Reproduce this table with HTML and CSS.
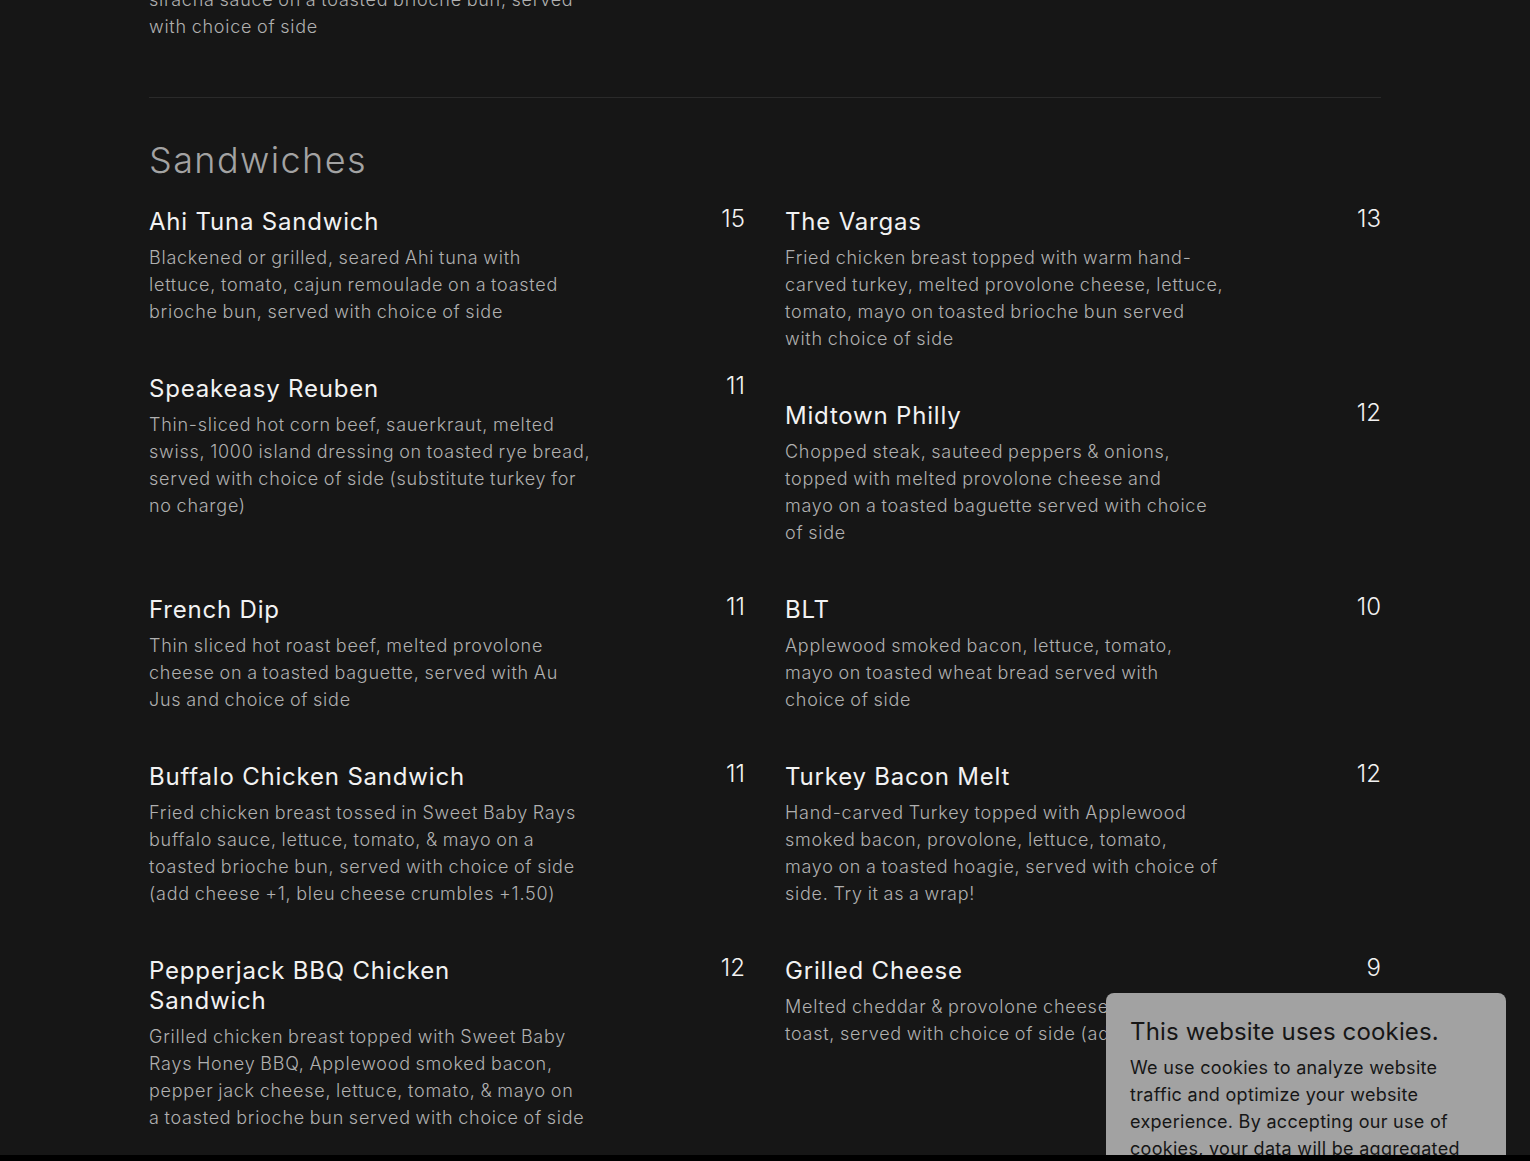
FILE: index.html
```html
<!DOCTYPE html>
<html lang="en">
<head>
    <meta charset="UTF-8">
    <meta name="viewport" content="width=device-width, initial-scale=1.0">
    <title>Menu - Sandwiches</title>
    <link rel="stylesheet" href="styles.css">
</head>
<body>
    <main class="menu">
        <!-- tail of the previous section, scrolled past -->
        <div class="columns section-tail">
            <div class="column">
                <p class="item-desc">siracha sauce on a toasted brioche bun, served<br>with choice of side</p>
            </div>
            <div class="column"></div>
        </div>

        <hr class="divider">

        <section>
            <h2 class="section-title">Sandwiches</h2>
            <div class="columns">
                <div class="column">
                    <div class="item">
                        <div class="item-body">
                            <h3 class="item-name">Ahi Tuna Sandwich</h3>
                            <p class="item-desc">Blackened or grilled, seared Ahi tuna with lettuce, tomato, cajun remoulade on a toasted brioche bun, served with choice of side</p>
                        </div>
                        <span class="item-price">15</span>
                    </div>
                    <div class="item extra-line">
                        <div class="item-body">
                            <h3 class="item-name">Speakeasy Reuben</h3>
                            <p class="item-desc">Thin-sliced hot corn beef, sauerkraut, melted swiss, 1000 island dressing on toasted rye bread, served with choice of side (substitute turkey for no charge)</p>
                        </div>
                        <span class="item-price">11</span>
                    </div>
                    <div class="item">
                        <div class="item-body">
                            <h3 class="item-name">French Dip</h3>
                            <p class="item-desc">Thin sliced hot roast beef, melted provolone cheese on a toasted baguette, served with Au Jus and choice of side</p>
                        </div>
                        <span class="item-price">11</span>
                    </div>
                    <div class="item">
                        <div class="item-body">
                            <h3 class="item-name">Buffalo Chicken Sandwich</h3>
                            <p class="item-desc">Fried chicken breast tossed in Sweet Baby Rays buffalo sauce, lettuce, tomato, &amp; mayo on a toasted brioche bun, served with choice of side (add cheese +1, bleu cheese crumbles +1.50)</p>
                        </div>
                        <span class="item-price">11</span>
                    </div>
                    <div class="item">
                        <div class="item-body">
                            <h3 class="item-name">Pepperjack BBQ Chicken Sandwich</h3>
                            <p class="item-desc">Grilled chicken breast topped with Sweet Baby Rays Honey BBQ, Applewood smoked bacon, pepper jack cheese, lettuce, tomato, &amp; mayo on<br>a toasted brioche bun served with choice of side</p>
                        </div>
                        <span class="item-price">12</span>
                    </div>
                </div>

                <div class="column">
                    <div class="item">
                        <div class="item-body">
                            <h3 class="item-name">The Vargas</h3>
                            <p class="item-desc">Fried chicken breast topped with warm hand-carved turkey, melted provolone cheese, lettuce, tomato, mayo on toasted brioche bun served with choice of side</p>
                        </div>
                        <span class="item-price">13</span>
                    </div>
                    <div class="item">
                        <div class="item-body">
                            <h3 class="item-name">Midtown Philly</h3>
                            <p class="item-desc">Chopped steak, sauteed peppers &amp; onions, topped with melted provolone cheese and<br>mayo on a toasted baguette served with choice of side</p>
                        </div>
                        <span class="item-price">12</span>
                    </div>
                    <div class="item">
                        <div class="item-body">
                            <h3 class="item-name">BLT</h3>
                            <p class="item-desc">Applewood smoked bacon, lettuce, tomato,<br>mayo on toasted wheat bread served with<br>choice of side</p>
                        </div>
                        <span class="item-price">10</span>
                    </div>
                    <div class="item">
                        <div class="item-body">
                            <h3 class="item-name">Turkey Bacon Melt</h3>
                            <p class="item-desc">Hand-carved Turkey topped with Applewood smoked bacon, provolone, lettuce, tomato,<br>mayo on a toasted hoagie, served with choice of side. Try it as a wrap!</p>
                        </div>
                        <span class="item-price">12</span>
                    </div>
                    <div class="item">
                        <div class="item-body">
                            <h3 class="item-name">Grilled Cheese</h3>
                            <p class="item-desc nowrap">Melted cheddar &amp; provolone cheese on toasted Texas<br>toast, served with choice of side (add bacon +2)</p>
                        </div>
                        <span class="item-price">9</span>
                    </div>
                </div>
            </div>
        </section>
    </main>

    <div class="cookie-banner">
        <h3 class="cookie-title">This website uses cookies.</h3>
        <p class="cookie-text">We use cookies to analyze website traffic and optimize your website experience. By accepting our use of cookies, your data will be aggregated with all other user data.</p>
    </div>

    <div class="bottom-bar"></div>
</body>
</html>
```

FILE: styles.css
```css
body {
    margin: 0;
    background-color: #161616;
    font-family: Inter, "Open Sans", sans-serif;
    color: #f2f2f2;
}
.menu {
    width: 1232px;
    margin: 0 auto;
}
.columns {
    display: flex;
    gap: 40px;
}
.column {
    flex: 1;
}
.section-tail {
    margin-top: -14px;
}
.divider {
    border: none;
    border-top: 1px solid #2a2a2a;
    margin: 57px 0 0;
}
.section-title {
    font-size: 36px;
    line-height: 44px;
    font-weight: 300;
    letter-spacing: 1.4px;
    color: #a3a3a3;
    margin: 40px 0 25px;
}
.item {
    display: flex;
    justify-content: space-between;
    padding-bottom: 49px;
}
.item.extra-line {
    padding-bottom: 76px;
}
.item-body {
    max-width: 442px;
}
.item-name {
    max-width: 400px;
    font-size: 24px;
    line-height: 30px;
    font-weight: 400;
    letter-spacing: 0.8px;
    color: #f2f2f2;
    margin: 0 0 7px;
}
.item-desc {
    font-size: 18px;
    line-height: 27px;
    font-weight: 300;
    letter-spacing: 0.75px;
    word-spacing: -1px;
    color: #b0b0b0;
    margin: 0;
}
.item-desc.nowrap {
    white-space: nowrap;
}
.item-price {
    font-size: 24px;
    line-height: 24px;
    font-weight: 300;
    color: #f2f2f2;
}
.cookie-banner {
    position: fixed;
    right: 24px;
    bottom: 0;
    width: 352px;
    height: 145px;
    padding: 23px 24px 0;
    overflow: hidden;
    background-color: #a2a2a2;
    border-radius: 8px 8px 0 0;
    color: #161616;
}
.cookie-title {
    font-size: 24px;
    line-height: 30px;
    font-weight: 400;
    letter-spacing: 0.15px;
    margin: 1px 0 7px;
}
.cookie-text {
    font-size: 18px;
    line-height: 27px;
    letter-spacing: 0.3px;
    margin: 0;
}
.bottom-bar {
    position: fixed;
    left: 0;
    right: 0;
    bottom: 0;
    height: 6px;
    background-color: #000;
}
```
